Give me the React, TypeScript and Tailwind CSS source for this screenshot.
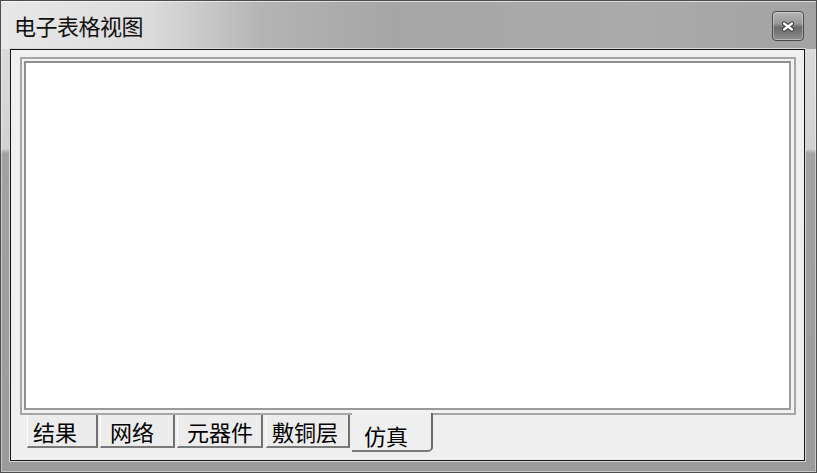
import React from "react"

const tabs = [
  { label: "结果", w: "w-[71px]", pl: "pl-[5px]", ml: "" },
  { label: "网络", w: "w-[75px]", pl: "pl-[9px]", ml: "ml-[2px]" },
  { label: "元器件", w: "w-[86px]", pl: "pl-[9px]", ml: "ml-[2px]" },
  { label: "敷铜层", w: "w-[84px]", pl: "pl-[5px]", ml: "ml-[3px]" },
]

function CloseButton() {
  return (
    <div className="mt-[2px] flex h-[30px] w-[32px] items-center justify-center rounded-[4px] border border-[#4a4a4a] bg-[linear-gradient(to_bottom,#b4b4b4_0%,#9a9a9a_40%,#6c6c6c_55%,#7c7c7c_80%,#949494_100%)] shadow-[inset_0_0_0_1px_rgba(255,255,255,0.35)]">
      <svg width="14" height="11" viewBox="0 0 14 11">
        <path d="M3 2.5 L11 8.5 M11 2.5 L3 8.5" stroke="#3c3c3c" strokeWidth="4.2" strokeLinecap="round" />
        <path d="M3 2.5 L11 8.5 M11 2.5 L3 8.5" stroke="#ffffff" strokeWidth="2.2" strokeLinecap="round" />
      </svg>
    </div>
  )
}

export default function App() {
  return (
    <div
      className="flex h-[473px] w-[817px] flex-col border border-[#4d4d4d] bg-[linear-gradient(to_bottom,#dedede_0px,#d2d2d2_148px,#a2a2a2_152px,#9a9a9a_100%)] shadow-[inset_0_0_0_1px_rgba(255,255,255,0.45)]"
      style={{ fontFamily: '"Noto Sans CJK SC", "Noto Sans", sans-serif' }}
    >
      <div className="flex h-[48px] shrink-0 items-center justify-between bg-[linear-gradient(to_right,#e8e8e8_0%,#dcdcdc_18%,#b4b4b4_32%,#a6a6a6_48%,#aaaaaa_78%,#a3a3a3_100%)] pl-[13px] pr-[12px] shadow-[inset_0_1px_0_rgba(255,255,255,0.6)]">
        <span className="text-[22px] leading-none tracking-[-0.5px] text-[#111]">电子表格视图</span>
        <CloseButton />
      </div>

      <div className="flex min-h-0 flex-1 pb-[11px] pl-[9px] pr-[11px]">
        <div className="flex flex-1 flex-col border border-[#151515] bg-[#efefef] pb-[12px] pl-[9px] pr-[8px] pt-[7px] shadow-[0_0_0_1px_#d6d6d6]">
          <div className="flex min-h-0 flex-1 border-2 border-[#a6a6a6] bg-[#f2f2f2] p-[2px] pr-[3px] pb-[3px]">
            <div className="flex-1 border-2 border-[#9a9a9a] border-t-[#8e8e8e] border-l-[#8e8e8e] bg-white" />
          </div>

          <div className="flex h-[33px] shrink-0 items-start pl-[7px]">
            {tabs.map((t) => (
              <div
                key={t.label}
                className={`flex h-[33px] items-center border-b-2 border-l border-r-2 border-b-[#7a7a7a] border-l-[#fbfbfb] border-r-[#707070] bg-[#ececec] ${t.w} ${t.pl} ${t.ml} text-[22px] leading-none text-[#000]`}
              >
                {t.label}
              </div>
            ))}
            <div className="relative z-10 -mt-[2px] ml-[2px] flex h-[39px] w-[81px] items-center rounded-br-[5px] border-b-2 border-r-2 border-b-[#7a7a7a] border-r-[#6a6a6a] bg-[#efefef] pl-[12px] pt-[6px] text-[22px] leading-none text-[#000]">
              仿真
            </div>
          </div>
        </div>
      </div>
    </div>
  )
}
